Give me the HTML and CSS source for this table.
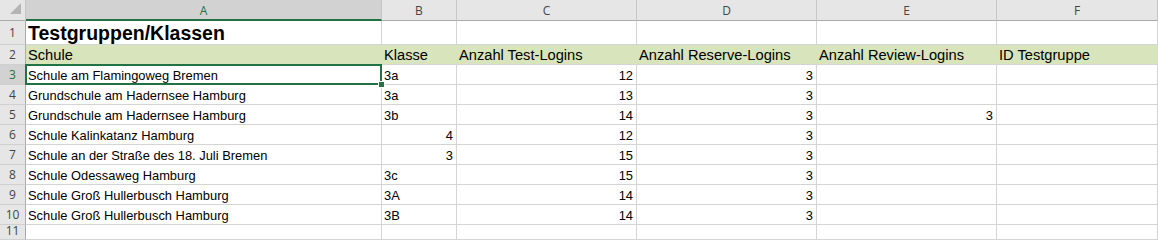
FILE: index.html
```html
<!DOCTYPE html>
<html lang="de">
<head>
    <meta charset="UTF-8">
    <meta name="viewport" content="width=device-width, initial-scale=1.0">
    <title>Testgruppen/Klassen</title>
    <link rel="stylesheet" href="styles.css">
</head>
<body>
<div class="sheet-wrap">
    <table class="sheet">
        <colgroup>
            <col class="col-head">
            <col class="col-a">
            <col class="col-b">
            <col class="col-c">
            <col class="col-d">
            <col class="col-e">
            <col class="col-f">
        </colgroup>
        <thead>
        <tr class="letters">
            <th class="corner"><span class="corner-tri"></span></th>
            <th class="active">A</th>
            <th>B</th>
            <th>C</th>
            <th>D</th>
            <th>E</th>
            <th>F</th>
        </tr>
        </thead>
        <tbody>
        <tr class="title-row">
            <th>1</th>
            <td class="title">Testgruppen/Klassen</td>
            <td></td><td></td><td></td><td></td><td></td>
        </tr>
        <tr class="fill-row">
            <th>2</th>
            <td>Schule</td>
            <td>Klasse</td>
            <td>Anzahl Test-Logins</td>
            <td>Anzahl Reserve-Logins</td>
            <td>Anzahl Review-Logins</td>
            <td>ID Testgruppe</td>
        </tr>
        <tr>
            <th class="active">3</th>
            <td class="selected">Schule am Flamingoweg Bremen</td>
            <td>3a</td>
            <td class="num">12</td>
            <td class="num">3</td>
            <td></td><td></td>
        </tr>
        <tr>
            <th>4</th>
            <td>Grundschule am Hadernsee Hamburg</td>
            <td>3a</td>
            <td class="num">13</td>
            <td class="num">3</td>
            <td></td><td></td>
        </tr>
        <tr>
            <th>5</th>
            <td>Grundschule am Hadernsee Hamburg</td>
            <td>3b</td>
            <td class="num">14</td>
            <td class="num">3</td>
            <td class="num">3</td>
            <td></td>
        </tr>
        <tr>
            <th>6</th>
            <td>Schule Kalinkatanz Hamburg</td>
            <td class="num">4</td>
            <td class="num">12</td>
            <td class="num">3</td>
            <td></td><td></td>
        </tr>
        <tr>
            <th>7</th>
            <td>Schule an der Straße des 18. Juli Bremen</td>
            <td class="num">3</td>
            <td class="num">15</td>
            <td class="num">3</td>
            <td></td><td></td>
        </tr>
        <tr>
            <th>8</th>
            <td>Schule Odessaweg Hamburg</td>
            <td>3c</td>
            <td class="num">15</td>
            <td class="num">3</td>
            <td></td><td></td>
        </tr>
        <tr>
            <th>9</th>
            <td>Schule Groß Hullerbusch Hamburg</td>
            <td>3A</td>
            <td class="num">14</td>
            <td class="num">3</td>
            <td></td><td></td>
        </tr>
        <tr>
            <th>10</th>
            <td>Schule Groß Hullerbusch Hamburg</td>
            <td>3B</td>
            <td class="num">14</td>
            <td class="num">3</td>
            <td></td><td></td>
        </tr>
        <tr class="last-row">
            <th>11</th>
            <td></td><td></td><td></td><td></td><td></td><td></td>
        </tr>
        </tbody>
    </table>
</div>
</body>
</html>
```

FILE: styles.css
```css
body {
    margin: 0;
    background-color: #fff;
    font-family: "Liberation Sans", Arial, sans-serif;
}

.sheet-wrap {
    width: 1158px;
    height: 240px;
    overflow: hidden;
}

.sheet {
    border-collapse: separate;
    border-spacing: 0;
    table-layout: fixed;
    width: 1158px;
}

.col-head { width: 26px; }
.col-a { width: 356px; }
.col-b { width: 75px; }
.col-c { width: 180px; }
.col-d { width: 180px; }
.col-e { width: 180px; }
.col-f { width: 161px; }

td, th {
    box-sizing: border-box;
    padding: 0;
    white-space: nowrap;
    overflow: hidden;
}

/* grid cells */
td {
    height: 20px;
    padding: 0 3px 0 2px;
    border-right: 1px solid #d4d4d4;
    border-bottom: 1px solid #d4d4d4;
    font-size: 12.9px;
    line-height: 17px;
    color: #000;
    vertical-align: bottom;
    text-align: left;
}

td.num {
    text-align: right;
}

/* row and column headers */
th {
    background-color: #e6e6e6;
    font-family: "Open Sans", "Noto Sans", sans-serif;
    font-weight: normal;
    font-size: 12px;
    color: #444;
    text-align: center;
    vertical-align: middle;
    border-right: 1px solid #c6c6c6;
    border-bottom: 1px solid #d0d0d0;
}

tbody th {
    border-right-color: #ababab;
}

.letters th {
    height: 21px;
    border-bottom: 1px solid #ababab;
    padding-top: 1px;
}

.letters th.active {
    border-bottom: 2px solid #217346;
}

th.active {
    background-color: #d2d2d2;
    color: #217346;
}

.corner {
    text-align: right;
    vertical-align: bottom;
    padding: 0 4px 2px 0;
}

.corner-tri {
    display: inline-block;
    width: 0;
    height: 0;
    border-left: 11px solid transparent;
    border-bottom: 11px solid #b4b4b4;
}

.title-row td {
    height: 24px;
    line-height: 22px;
}

.title {
    font-size: 19.5px;
    font-weight: bold;
}

.fill-row td {
    background-color: #d8e4bc;
    border-right-color: #d8e4bc;
    font-size: 14.67px;
}

/* only the top of row 11 is visible */
.last-row th,
.last-row td {
    height: 15px;
    line-height: 12px;
    vertical-align: top;
    padding-top: 0;
    overflow: visible;
}

/* active cell frame with fill handle */
td.selected {
    position: relative;
    overflow: visible;
}

td.selected::after {
    content: "";
    position: absolute;
    top: -1px;
    left: -1px;
    right: -1px;
    bottom: -1px;
    border: 2px solid #217346;
    pointer-events: none;
}

td.selected::before {
    content: "";
    position: absolute;
    right: -4px;
    bottom: -4px;
    width: 5px;
    height: 5px;
    background-color: #217346;
    border: 1px solid #fff;
    z-index: 1;
}
```
